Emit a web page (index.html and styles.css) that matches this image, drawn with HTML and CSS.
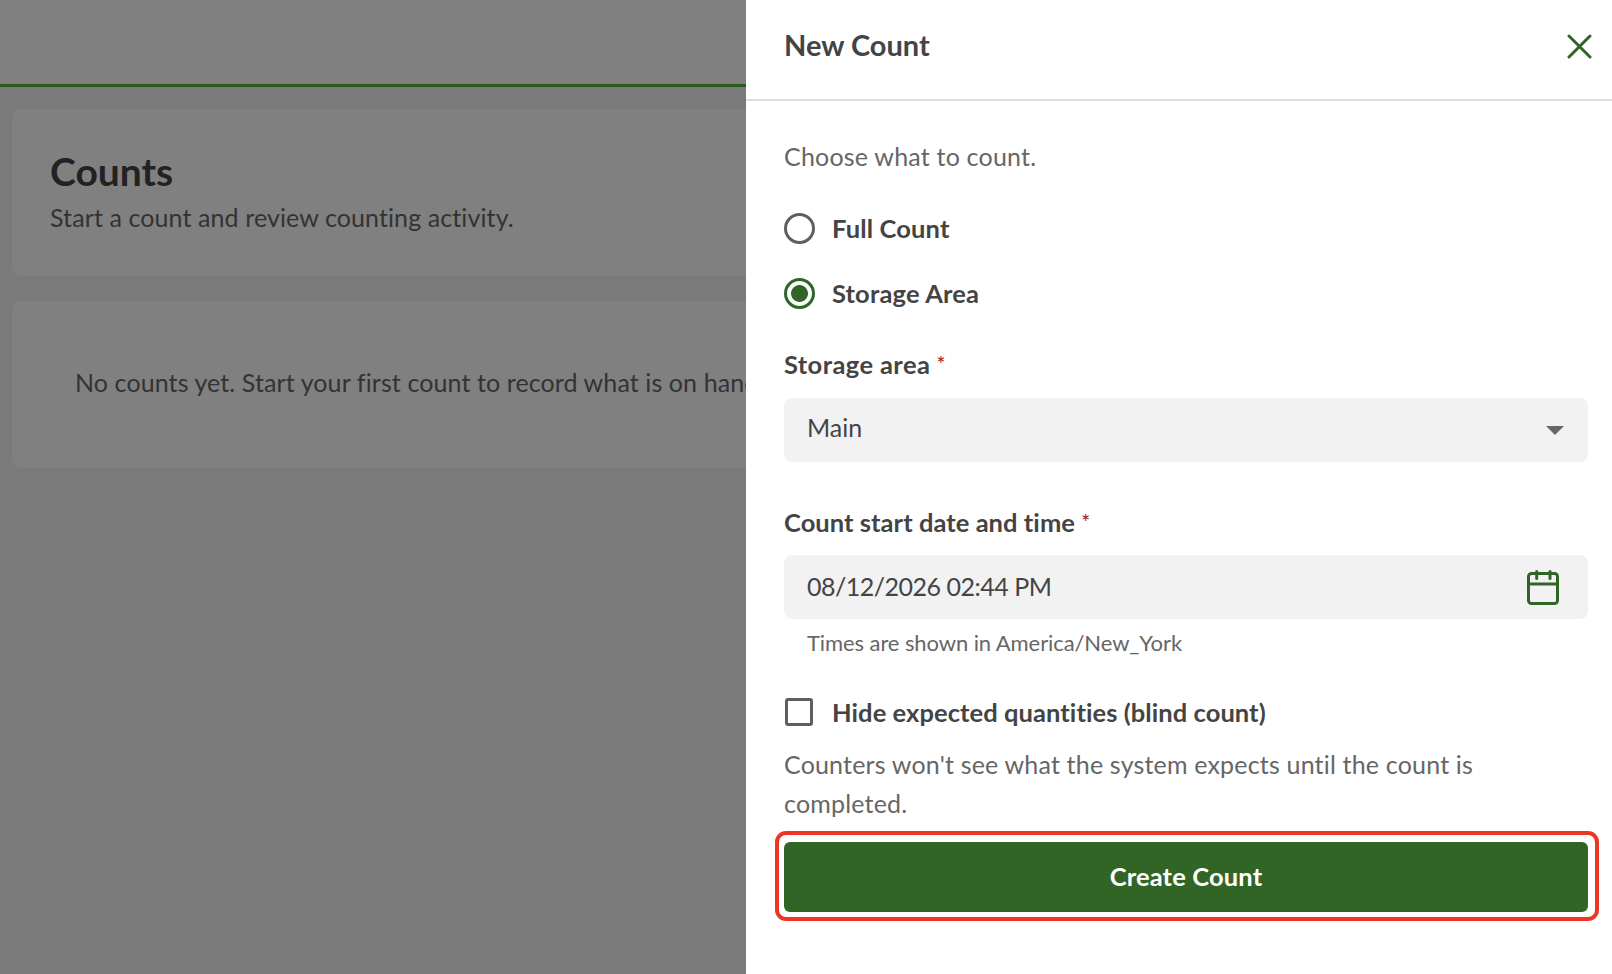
FILE: index.html
```html
<!DOCTYPE html>
<html lang="en">
  <head>
    <meta charset="UTF-8" />
    <meta name="viewport" content="width=device-width, initial-scale=1.0" />
    <title>New Count</title>
    <link rel="stylesheet" href="styles.css">
  </head>

  <body>
    <div class="page">
      <header class="topbar"></header>
      <main class="content">
        <section class="card card-head">
          <h1>Counts</h1>
          <p>Start a count and review counting activity.</p>
        </section>
        <section class="card card-empty">
          <p>No counts yet. Start your first count to record what is on hand.</p>
        </section>
      </main>
    </div>

    <aside class="drawer">
      <div class="drawer-head">
        <h2>New Count</h2>
        <button class="close" type="button" aria-label="Close">
          <svg width="26" height="26" viewBox="0 0 26 26" fill="none" stroke="#316525" stroke-width="3" stroke-linecap="round">
            <path d="M3 3 L24 24 M24 3 L3 24" />
          </svg>
        </button>
      </div>
      <form class="drawer-body" autocomplete="off">
        <p class="intro">Choose what to count.</p>

        <label class="radio-row radio-first">
          <span class="radio"></span>
          <span class="option">Full Count</span>
        </label>
        <label class="radio-row">
          <span class="radio radio-on"></span>
          <span class="option">Storage Area</span>
        </label>

        <div class="field-label field-area">Storage area<span class="req">*</span></div>
        <div class="field">
          <span class="field-text select-text">Main</span>
          <span class="caret"></span>
        </div>

        <div class="field-label field-date">Count start date and time<span class="req">*</span></div>
        <div class="field">
          <span class="field-text date-text">08/12/2026 02:44 PM</span>
          <svg class="cal" width="32" height="35" viewBox="0 0 32 35" fill="none" stroke="#316525" stroke-width="3" stroke-linecap="round" stroke-linejoin="round">
            <rect x="1.500" y="3.500" width="29" height="30" rx="3" />
            <path d="M1.500 14 H30.500 M9.700 1.500 V8.500 M23 1.500 V8.500" />
          </svg>
        </div>
        <div class="hint">Times are shown in America/New_York</div>

        <label class="check-row">
          <span class="checkbox"></span>
          <span class="option">Hide expected quantities (blind count)</span>
        </label>
        <p class="note">Counters won't see what the system expects until the count is completed.</p>

        <div class="submit-wrap">
          <button class="submit" type="button">Create Count</button>
        </div>
      </form>
    </aside>
  </body>
</html>
```

FILE: styles.css
```css
* {
  margin: 0;
  padding: 0;
  box-sizing: border-box;
}

html,
body {
  height: 100%;
  overflow: hidden;
}
body {
  font-family: "Lato", "Liberation Sans", sans-serif;
  background: #7a7a7a;
  color: #444;
}

/* page behind the drawer, already dimmed */
.topbar {
  height: 87px;
  background: #808080;
  border-bottom: 3px solid #2b5a1a;
}
.content {
  padding: 22px 12px 0;
  width: 1612px;
}
.card {
  background: #808080;
  border-radius: 10px;
  margin-bottom: 25px;
  height: 167px;
}
.card-head {
  padding: 40px 38px 0;
}
.card-head h1 {
  font-size: 39px;
  line-height: 44px;
  color: #222;
  font-weight: 700;
}
.card-head p {
  font-size: 25px;
  line-height: 30px;
  margin-top: 9px;
  letter-spacing: 0.1px;
  color: #333;
}
.card-empty {
  padding: 65px 63px 0;
}
.card-empty p {
  font-size: 25px;
  line-height: 32px;
  letter-spacing: 0.1px;
  color: #333;
}

.drawer {
  position: absolute;
  top: 0;
  right: 0;
  bottom: 0;
  width: 866px;
  background: #fff;
}
.drawer-head {
  height: 101px;
  padding: 0 20px 10px 38px;
  border-bottom: 2px solid #ddd;
  display: flex;
  align-items: center;
  justify-content: space-between;
}
.drawer-head h2 {
  font-size: 29px;
  font-weight: 700;
  color: #444;
}
.close {
  border: 0;
  background: none;
  display: flex;
  margin-top: 2px;
  cursor: pointer;
}
.drawer-body {
  padding: 0 24px 0 38px;
}
.intro {
  font-size: 25px;
  line-height: 32px;
  padding-top: 39px;
  letter-spacing: 0.2px;
  color: #666;
  box-sizing: content-box;
}

.radio-row {
  display: flex;
  align-items: center;
  gap: 17px;
  height: 30px;
  margin-top: 35px;
}
.radio-first {
  margin-top: 41px;
}
.radio {
  width: 31px;
  height: 31px;
  border-radius: 50%;
  border: 3px solid #5f5f5f;
  flex: none;
}
.radio-on {
  border-color: #316525;
  background: radial-gradient(circle, #316525 0 8px, #fff 8.800px);
}
.option {
  font-size: 25.500px;
  letter-spacing: 0.15px;
  font-weight: 700;
  color: #444;
}

.field-label {
  font-size: 25.500px;
  font-weight: 700;
  line-height: 32px;
  color: #444;
}
.field-area {
  margin-top: 40px;
  letter-spacing: 0.4px;
}
.field-date {
  margin-top: 44px;
  letter-spacing: 0.05px;
}
.req {
  color: #a3201a;
  font-size: 22px;
  font-weight: 400;
  margin-left: 6px;
  vertical-align: 2px;
}
.field {
  height: 64px;
  margin-top: 18px;
  padding: 0 29px 0 23px;
  background: #f2f2f2;
  border-radius: 8px;
  display: flex;
  align-items: center;
  justify-content: space-between;
  font-size: 25px;
  color: #444;
}
.field-date + .field {
  margin-top: 17px;
}
.field-text {
  padding-bottom: 3px;
}
.select-text {
  padding-bottom: 6px;
}
.date-text {
  letter-spacing: -0.5px;
}
.caret {
  width: 0;
  height: 0;
  border-left: 9px solid transparent;
  border-right: 9px solid transparent;
  border-top: 9px solid #666;
  margin-top: 1px;
  margin-right: -5px;
}
.hint {
  font-size: 22px;
  line-height: 28px;
  margin-top: 10px;
  padding-left: 23px;
  letter-spacing: -0.09px;
  color: #666;
}

.check-row {
  display: flex;
  align-items: center;
  gap: 19px;
  height: 30px;
  margin-top: 40px;
}
.check-row .option {
  letter-spacing: 0.07px;
}
.checkbox {
  width: 28px;
  height: 28px;
  border: 3px solid #5f5f5f;
  border-radius: 3px;
  flex: none;
  margin-left: 1px;
}
.note {
  font-size: 25px;
  line-height: 39px;
  margin-top: 18px;
  letter-spacing: 0.18px;
  color: #666;
}

.submit-wrap {
  position: relative;
  margin-top: 19px;
}
/* red marker round the button */
.submit-wrap::after {
  content: "";
  position: absolute;
  top: -11px;
  bottom: -9px;
  left: -9px;
  right: -11px;
  border: 4px solid #ee3524;
  border-radius: 11px;
  pointer-events: none;
}
.submit {
  width: 100%;
  height: 70px;
  padding-bottom: 3px;
  border: 0;
  border-radius: 6px;
  background: #316525;
  color: #fff;
  font-family: inherit;
  font-size: 25.500px;
  letter-spacing: 0.15px;
  font-weight: 700;
  cursor: pointer;
}
```
